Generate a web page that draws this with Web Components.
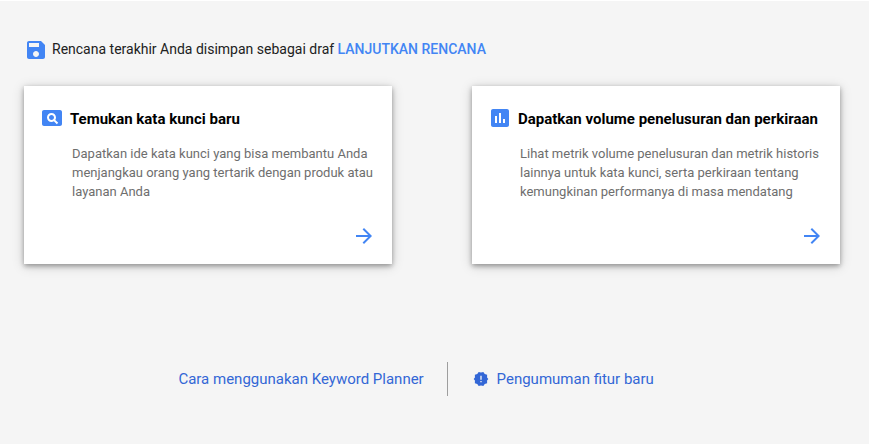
<!DOCTYPE html>
<html lang="id">
<head>
<meta charset="utf-8">
<title>Keyword Planner</title>
<style>
html, body { margin: 0; padding: 0; background: #fff; }
body { width: 870px; height: 445px; overflow: hidden; font-family: Roboto, sans-serif; }
</style>
</head>
<body>
<planner-home></planner-home>
<script>
const ICONS = {
  save: 'M17 3H5c-1.11 0-2 .9-2 2v14c0 1.1.89 2 2 2h14c1.1 0 2-.9 2-2V7l-4-4zm-5 16c-1.66 0-3-1.34-3-3s1.34-3 3-3 3 1.34 3 3-1.34 3-3 3zm3-10H5V5h10v4z',
  pageview: 'M11.5 9C10.12 9 9 10.12 9 11.5s1.12 2.5 2.5 2.5 2.5-1.12 2.5-2.5S12.88 9 11.5 9zM20 4H4c-1.1 0-2 .9-2 2v12c0 1.1.9 2 2 2h16c1.1 0 2-.9 2-2V6c0-1.1-.9-2-2-2zm-3.21 14.21l-2.91-2.91c-.69.44-1.51.7-2.39.7C9.01 16 7 13.99 7 11.5S9.01 7 11.5 7 16 9.01 16 11.5c0 .88-.26 1.69-.7 2.39l2.91 2.9-1.42 1.42z',
  chart: 'M19 3H5c-1.1 0-2 .9-2 2v14c0 1.1.9 2 2 2h14c1.1 0 2-.9 2-2V5c0-1.1-.9-2-2-2zM9 17H7v-7h2v7zm4 0h-2V7h2v10zm4 0h-2v-4h2v4z',
  arrow: 'M12 4l-1.41 1.41L16.17 11H4v2h12.17l-5.58 5.59L12 20l8-8z',
  release: 'M23 12l-1.9-2.4.1-4.1-3.6-1.1-2.1-2.9L12 2.2 8.5 1.5 6.4 4.4 2.8 5.5l.1 4.1L1 12l1.9 2.4-.1 4.1 3.6 1.1 2.1 2.9L12 21.8l3.5.7 2.1-2.9 3.6-1.1-.1-4.1L23 12zm-10 5h-2v-2h2v2zm0-4h-2V7h2v6z'
};

class UiIcon extends HTMLElement {
  connectedCallback() {
    const root = this.attachShadow({ mode: 'open' });
    const size = this.getAttribute('size') || 24;
    root.innerHTML = `
      <style>
        :host { display: block; flex: none; color: #4285f4; width: ${size}px; height: ${size}px; }
        svg { display: block; fill: currentColor; }
      </style>
      <svg width="${size}" height="${size}" viewBox="0 0 24 24" aria-hidden="true"><path d="${ICONS[this.getAttribute('name')]}"/></svg>`;
  }
}
customElements.define('ui-icon', UiIcon);

class DraftNotice extends HTMLElement {
  connectedCallback() {
    this.attachShadow({ mode: 'open' }).innerHTML = `
      <style>
        :host { display: flex; align-items: center; gap: 4px; height: 24px; font-size: 14px; line-height: 20px; color: #212121; white-space: nowrap; }
        p { margin: -2px 0 0; }
        ::slotted(a) { color: #4285f4; font-weight: 500; text-decoration: none; }
      </style>
      <ui-icon name="save"></ui-icon><p><slot></slot></p>`;
  }
}
customElements.define('draft-notice', DraftNotice);

class ActionCard extends HTMLElement {
  connectedCallback() {
    this.attachShadow({ mode: 'open' }).innerHTML = `
      <style>
        :host { display: flex; flex-direction: column; box-sizing: border-box; width: 368px; height: 178px; padding: 20px 16px 16px; background: #fff; box-shadow: 0 2px 5px rgba(0,0,0,.35), 0 2px 12px rgba(0,0,0,.16); }
        header { display: flex; align-items: center; gap: 6px; height: 24px; }
        h2 { margin: 2px 0 0; font-size: 15px; line-height: 20px; font-weight: 700; color: #000; white-space: nowrap; }
        p { margin: 14px 0 0 32px; font-size: 13px; line-height: 19px; color: #6e6e6e; white-space: nowrap; }
        .go { margin: auto 0 0 auto; }
      </style>
      <header><ui-icon name="${this.getAttribute('icon')}"></ui-icon><h2><slot name="title"></slot></h2></header>
      <p><slot></slot></p>
      <ui-icon class="go" name="arrow"></ui-icon>`;
  }
}
customElements.define('action-card', ActionCard);

class HelpLinks extends HTMLElement {
  connectedCallback() {
    this.attachShadow({ mode: 'open' }).innerHTML = `
      <style>
        :host { display: flex; align-items: center; height: 34px; font-size: 15px; line-height: 20px; white-space: nowrap; }
        a { display: flex; align-items: center; color: #3367d6; text-decoration: none; }
        .guide { box-sizing: border-box; width: 269px; padding-left: .4px; }
        .news { border-left: 1px solid #9e9e9e; height: 34px; padding-left: 24.6px; gap: 8px; }
        ui-icon { color: #3367d6; }
      </style>
      <a class="guide">Cara menggunakan Keyword Planner</a>
      <a class="news"><ui-icon name="release" size="16"></ui-icon><span>Pengumuman fitur baru</span></a>`;
  }
}
customElements.define('help-links', HelpLinks);

class PlannerHome extends HTMLElement {
  connectedCallback() {
    this.attachShadow({ mode: 'open' }).innerHTML = `
      <style>
        :host { display: block; box-sizing: border-box; width: 869px; height: 443px; margin-top: 1px; padding: 37px 24px 0; background: #f5f5f5; }
        .cards { display: flex; gap: 80px; margin-top: 24px; }
        help-links { margin: 98px 0 0 154px; }
      </style>
      <draft-notice>Rencana terakhir Anda disimpan sebagai draf <a>LANJUTKAN RENCANA</a></draft-notice>
      <div class="cards">
        <action-card icon="pageview"><span slot="title">Temukan kata kunci baru</span>Dapatkan ide kata kunci yang bisa membantu Anda<br>menjangkau orang yang tertarik dengan produk atau<br>layanan Anda</action-card>
        <action-card icon="chart"><span slot="title">Dapatkan volume penelusuran dan perkiraan</span>Lihat metrik volume penelusuran dan metrik historis<br>lainnya untuk kata kunci, serta perkiraan tentang<br>kemungkinan performanya di masa mendatang</action-card>
      </div>
      <help-links></help-links>`;
  }
}
customElements.define('planner-home', PlannerHome);
</script>
</body>
</html>
